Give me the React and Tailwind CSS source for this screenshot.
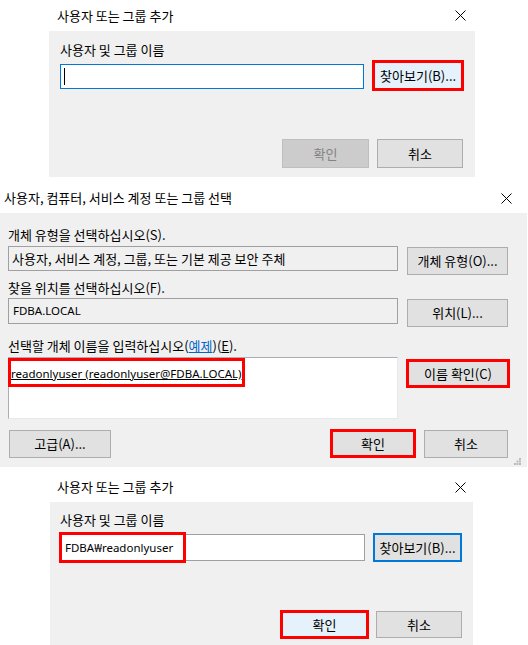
import React from 'react';

const CloseIcon = () => (
  <svg width="11" height="11" viewBox="0 0 11 11" className="shrink-0">
    <path d="M0.5 0.5 L10.5 10.5 M10.5 0.5 L0.5 10.5" stroke="#000" strokeWidth="1" fill="none" />
  </svg>
);

const Btn = ({ className = '', children }) => (
  <div className={`flex items-center justify-center text-black ${className}`}>
    {children}
  </div>
);

// latin-only strings read closer to Segoe UI in Noto Sans at a smaller size
const Latin = ({ className = '', children }) => (
  <span className={`font-['Noto_Sans',sans-serif] text-[11.5px] ${className}`}>{children}</span>
);

const App = () => {
  return (
    <div className="w-[528px] h-[645px] bg-white overflow-hidden font-['Noto_Sans_CJK_KR','Noto_Sans',sans-serif] text-[13px] leading-4 text-black">
      {/* 사용자 또는 그룹 추가 (empty) */}
      <div className="ml-[49px] w-[426px]">
        <div className="h-[31px] bg-white flex items-center justify-between pl-[8px] pr-[9px]">
          <span>사용자 또는 그룹 추가</span>
          <CloseIcon />
        </div>
        <div className="h-[146px] bg-[#f0f0f0] px-[11px] pt-[11px] flex flex-col">
          <div>사용자 및 그룹 이름</div>
          <div className="flex items-start mt-[2px]">
            <div className="mt-[4px] w-[305px] h-[25px] bg-white border border-[#0078d7] flex items-center pl-[3px]">
              <div className="w-px h-[17px] bg-black" />
            </div>
            <Btn className="ml-[8px] w-[92px] h-[31px] bg-[#e5f1fb] border-[3px] border-[#ff0000]">찾아보기(B)...</Btn>
          </div>
          <div className="flex justify-end gap-[8px] mt-[48px] pr-[1px]">
            <Btn className="w-[87px] h-[29px] bg-[#cccccc] border border-[#bfbfbf] !text-[#838383]">확인</Btn>
            <Btn className="w-[86px] h-[29px] bg-[#e1e1e1] border border-[#adadad]">취소</Btn>
          </div>
        </div>
      </div>

      {/* 사용자, 컴퓨터, 서비스 계정 또는 그룹 선택 */}
      <div className="w-[527px]">
        <div className="h-[36px] bg-white flex items-start justify-between pl-[4px] pr-[15px] pt-[13px]">
          <span>사용자, 컴퓨터, 서비스 계정 또는 그룹 선택</span>
          <div className="mt-[3px]"><CloseIcon /></div>
        </div>
        <div className="relative h-[254px] bg-[#f0f0f0] px-[8px] pt-[14px] flex flex-col">
          <div>개체 유형을 선택하십시오(S).</div>
          <div className="flex items-start mt-[3px]">
            <div className="w-[390px] h-[25px] border border-[#a0a0a0] bg-[#f0f0f0] flex items-center pl-[3px]">
              사용자, 서비스 계정, 그룹, 또는 기본 제공 보안 주체
            </div>
            <Btn className="ml-[9px] mt-[1px] w-[101px] h-[28px] bg-[#e1e1e1] border border-[#adadad]">개체 유형(O)...</Btn>
          </div>
          <div className="mt-[5px]">찾을 위치를 선택하십시오(F).</div>
          <div className="flex items-start mt-[2px]">
            <div className="w-[390px] h-[26px] border border-[#a0a0a0] bg-[#f0f0f0] flex items-center pl-[4px]">
              <Latin>FDBA.LOCAL</Latin>
            </div>
            <Btn className="ml-[9px] mt-[1px] w-[101px] h-[28px] bg-[#e1e1e1] border border-[#adadad]">위치(L)...</Btn>
          </div>
          <div className="mt-[11px]">
            선택할 개체 이름을 입력하십시오(<span className="text-[#0066cc] underline">예제</span>)(<span className="underline">E</span>).
          </div>
          <div className="flex items-start mt-[3px]">
            <div className="relative w-[390px] h-[62px] bg-white border border-[#abadb3] border-r-[#e3e9ef] border-b-[#e3e9ef] pl-[2px] pt-[7px]">
              <Latin className="underline">readonlyuser (readonlyuser@FDBA.LOCAL)</Latin>
              <div className="absolute left-[-1px] top-0 w-[237px] h-[29px] border-[3px] border-[#ff0000]" />
            </div>
            <Btn className="ml-[8px] mt-[2px] w-[104px] h-[29px] bg-[#e1e1e1] border-[3px] border-[#ff0000]">이름 확인(C)</Btn>
          </div>
          <div className="flex items-center mt-[10px]">
            <Btn className="ml-[1px] w-[102px] h-[28px] bg-[#e1e1e1] border border-[#adadad]">고급(A)...</Btn>
            <Btn className="ml-auto w-[86px] h-[29px] bg-[#e1e1e1] border-[3px] border-[#ff0000]">확인</Btn>
            <Btn className="ml-[8px] mr-[11px] w-[84px] h-[28px] bg-[#e1e1e1] border border-[#adadad]">취소</Btn>
          </div>
          <svg width="7" height="7" viewBox="0 0 7 7" className="absolute right-[6px] bottom-[2px]">
            <rect x="5" y="0" width="2" height="2" fill="#bcbcbc" />
            <rect x="2.5" y="2.5" width="2" height="2" fill="#bcbcbc" />
            <rect x="5" y="2.5" width="2" height="2" fill="#bcbcbc" />
            <rect x="0" y="5" width="2" height="2" fill="#bcbcbc" />
            <rect x="2.5" y="5" width="2" height="2" fill="#bcbcbc" />
            <rect x="5" y="5" width="2" height="2" fill="#bcbcbc" />
          </svg>
        </div>
      </div>

      {/* 사용자 또는 그룹 추가 (filled) */}
      <div className="ml-[50px] w-[423px]">
        <div className="h-[35px] bg-white flex items-start justify-between pl-[7px] pr-[7px] pt-[12px]">
          <span>사용자 또는 그룹 추가</span>
          <div className="mt-[3px]"><CloseIcon /></div>
        </div>
        <div className="h-[143px] bg-[#f0f0f0] px-[10px] pt-[10px] flex flex-col">
          <div>사용자 및 그룹 이름</div>
          <div className="flex items-start mt-[5px]">
            <div className="relative mt-[1px] w-[305px] h-[27px] bg-white border border-[#a0a0a0] flex items-center pl-[4px]">
              <Latin>FDBA₩readonlyuser</Latin>
              <div className="absolute left-[-2px] top-[-3px] w-[127px] h-[31px] border-[3px] border-[#ff0000]" />
            </div>
            <Btn className="ml-[8px] w-[89px] h-[29px] bg-[#e1e1e1] border-2 border-[#0078d7]">찾아보기(B)...</Btn>
          </div>
          <div className="flex items-center justify-end mt-[48px] pr-[1px]">
            <Btn className="w-[89px] h-[29px] bg-[#e5f1fb] border-[3px] border-[#ff0000]">확인</Btn>
            <Btn className="ml-[7px] w-[86px] h-[27px] bg-[#e1e1e1] border border-[#adadad]">취소</Btn>
          </div>
        </div>
      </div>
    </div>
  );
};

export default App;
